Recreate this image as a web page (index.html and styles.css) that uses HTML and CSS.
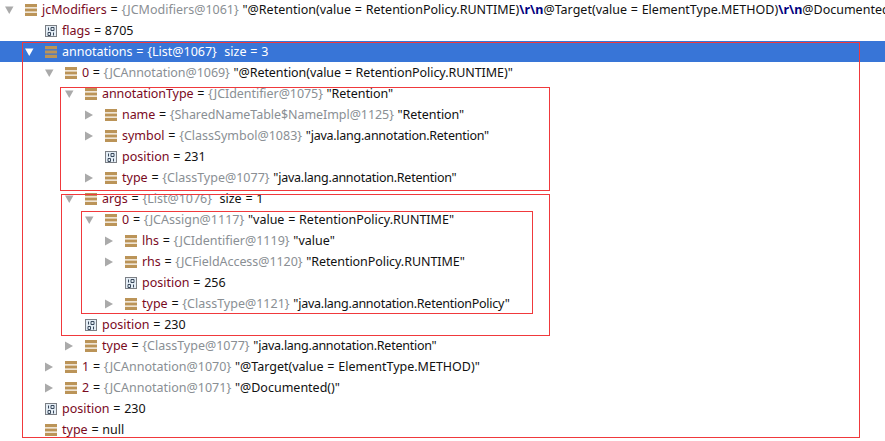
FILE: index.html
```html
<!DOCTYPE html>
<html lang="en">
<head>
<meta charset="utf-8">
<title>Debugger variables</title>
<link rel="stylesheet" href="styles.css">
</head>
<body>
<svg class="defs" aria-hidden="true">
  <symbol id="down" viewBox="0 0 10 10"><path d="M1 1.500H9.500L5.250 9Z"/></symbol>
  <symbol id="right" viewBox="0 0 10 10"><path d="M1 0.500V9.500L9 5Z"/></symbol>
  <symbol id="list" viewBox="0 0 12 12"><path fill="#bb9458" d="M0 0H12V3.300H0ZM0 4.400H12V7.600H0ZM0 8.700H12V12H0Z"/></symbol>
  <symbol id="field" viewBox="0 0 12 12">
    <rect x=".5" y=".5" width="11" height="11" fill="#e4edf5" stroke="#7b7f85"/>
    <path fill="none" stroke="#3b4a5c" d="M3.500 2.500V5.500M6 2.500H9V5.500H6ZM3 7.500H5.500V10.500H3ZM8.500 7.500V10.500"/>
  </symbol>
</svg>
<main class="tree">
  <div class="row l0"><svg class="arrow"><use href="#down"/></svg><svg class="icon"><use href="#list"/></svg><span class="line"><i>jcModifiers</i> = <b>{JCModifiers@1061}</b> "@Retention(value = RetentionPolicy.RUNTIME)<em>\r\n</em>@Target(value = ElementType.METHOD)<em>\r\n</em>@Documented()"</span></div>
  <div class="row l1 leaf"><svg class="icon"><use href="#field"/></svg><span class="line"><i>flags</i> = 8705</span></div>
  <div class="row l1 selected"><svg class="arrow"><use href="#down"/></svg><svg class="icon"><use href="#list"/></svg><span class="line"><i>annotations</i> = <b>{List@1067}</b>&nbsp; size = 3</span></div>
  <div class="row l2"><svg class="arrow"><use href="#down"/></svg><svg class="icon"><use href="#list"/></svg><span class="line snug"><i>0</i> = <b>{JCAnnotation@1069}</b> "@Retention(value = RetentionPolicy.RUNTIME)"</span></div>
  <div class="row l3"><svg class="arrow"><use href="#down"/></svg><svg class="icon"><use href="#list"/></svg><span class="line snug"><i>annotationType</i> = <b>{JCIdentifier@1075}</b> "Retention"</span></div>
  <div class="row l4"><svg class="arrow"><use href="#right"/></svg><svg class="icon"><use href="#list"/></svg><span class="line snug"><i>name</i> = <b>{SharedNameTable$NameImpl@1125}</b> "Retention"</span></div>
  <div class="row l4"><svg class="arrow"><use href="#right"/></svg><svg class="icon"><use href="#list"/></svg><span class="line"><i>symbol</i> = <b>{ClassSymbol@1083}</b> <span class="tight">"java.lang.annotation.Retention"</span></span></div>
  <div class="row l4 leaf"><svg class="icon"><use href="#field"/></svg><span class="line"><i>position</i> = 231</span></div>
  <div class="row l4"><svg class="arrow"><use href="#right"/></svg><svg class="icon"><use href="#list"/></svg><span class="line"><i>type</i> = <b>{ClassType@1077}</b> <span class="tight">"java.lang.annotation.Retention"</span></span></div>
  <div class="row l3"><svg class="arrow"><use href="#down"/></svg><svg class="icon"><use href="#list"/></svg><span class="line"><i>args</i> = <b>{List@1076}</b>&nbsp; size = 1</span></div>
  <div class="row l4"><svg class="arrow"><use href="#down"/></svg><svg class="icon"><use href="#list"/></svg><span class="line"><i>0</i> = <b>{JCAssign@1117}</b> "value = RetentionPolicy.RUNTIME"</span></div>
  <div class="row l5"><svg class="arrow"><use href="#right"/></svg><svg class="icon"><use href="#list"/></svg><span class="line"><i>lhs</i> = <b>{JCIdentifier@1119}</b> "value"</span></div>
  <div class="row l5"><svg class="arrow"><use href="#right"/></svg><svg class="icon"><use href="#list"/></svg><span class="line snug"><i>rhs</i> = <b>{JCFieldAccess@1120}</b> "RetentionPolicy.RUNTIME"</span></div>
  <div class="row l5 leaf"><svg class="icon"><use href="#field"/></svg><span class="line"><i>position</i> = 256</span></div>
  <div class="row l5"><svg class="arrow"><use href="#right"/></svg><svg class="icon"><use href="#list"/></svg><span class="line"><i>type</i> = <b>{ClassType@1121}</b> <span class="tight">"java.lang.annotation.RetentionPolicy"</span></span></div>
  <div class="row l3 leaf"><svg class="icon"><use href="#field"/></svg><span class="line"><i>position</i> = 230</span></div>
  <div class="row l3"><svg class="arrow"><use href="#right"/></svg><svg class="icon"><use href="#list"/></svg><span class="line"><i>type</i> = <b>{ClassType@1077}</b> <span class="tight">"java.lang.annotation.Retention"</span></span></div>
  <div class="row l2"><svg class="arrow"><use href="#right"/></svg><svg class="icon"><use href="#list"/></svg><span class="line"><i>1</i> = <b>{JCAnnotation@1070}</b> "@Target(value = ElementType.METHOD)"</span></div>
  <div class="row l2"><svg class="arrow"><use href="#right"/></svg><svg class="icon"><use href="#list"/></svg><span class="line"><i>2</i> = <b>{JCAnnotation@1071}</b> "@Documented()"</span></div>
  <div class="row l1 leaf"><svg class="icon"><use href="#field"/></svg><span class="line"><i>position</i> = 230</span></div>
  <div class="row l1 leaf"><svg class="icon"><use href="#list"/></svg><span class="line"><i>type</i> = null</span></div>
</main>
<div class="mark m1"></div>
<div class="mark m2"></div>
<div class="mark m3"></div>
<div class="mark m4"></div>
</body>
</html>
```
FILE: styles.css
```css
* { box-sizing: border-box; }
html, body { margin: 0; height: 441px; overflow: hidden; background: #fff; }
.defs { position: absolute; width: 0; height: 0; }
.tree {
  display: flex;
  flex-direction: column;
  margin-top: -1px;
  font-family: "Noto Sans", sans-serif;
  font-size: 12.5px;
  color: #111;
}
.row {
  display: flex;
  align-items: center;
  height: 21px;
  flex: none;
  white-space: nowrap;
}
.l0 { padding-left: 4px; }
.l1 { padding-left: 24px; }
.l2 { padding-left: 44px; }
.l3 { padding-left: 64px; }
.l4 { padding-left: 84px; }
.l5 { padding-left: 104px; }
.leaf .icon { margin-left: 21px; }
.arrow { width: 10px; height: 10px; flex: none; fill: #aaa; margin-right: 11px; }
.icon { width: 12px; height: 12px; flex: none; margin-right: 5px; }
.line { display: block; word-spacing: 0.5px; }
.line.snug { letter-spacing: -0.06px; }
.line i { font-style: normal; color: #7a0a1e; }
.line b { font-weight: 400; color: #8a8f94; }
.line em { font-style: normal; font-weight: 700; color: #000080; }
.tight { letter-spacing: -0.25px; }
.selected { background: #3875d7; color: #fff; }
.selected .arrow { fill: #fff; }
.selected .line i, .selected .line b { color: #fff; }
.mark { position: absolute; border: 1px solid #f0393c; }
.m1 { left: 22px; top: 42px; width: 838px; height: 396px; }
.m2 { left: 60px; top: 87px; width: 490px; height: 104px; }
.m3 { left: 61px; top: 194px; width: 489px; height: 142px; }
.m4 { left: 81px; top: 211px; width: 452px; height: 103px; }
```
